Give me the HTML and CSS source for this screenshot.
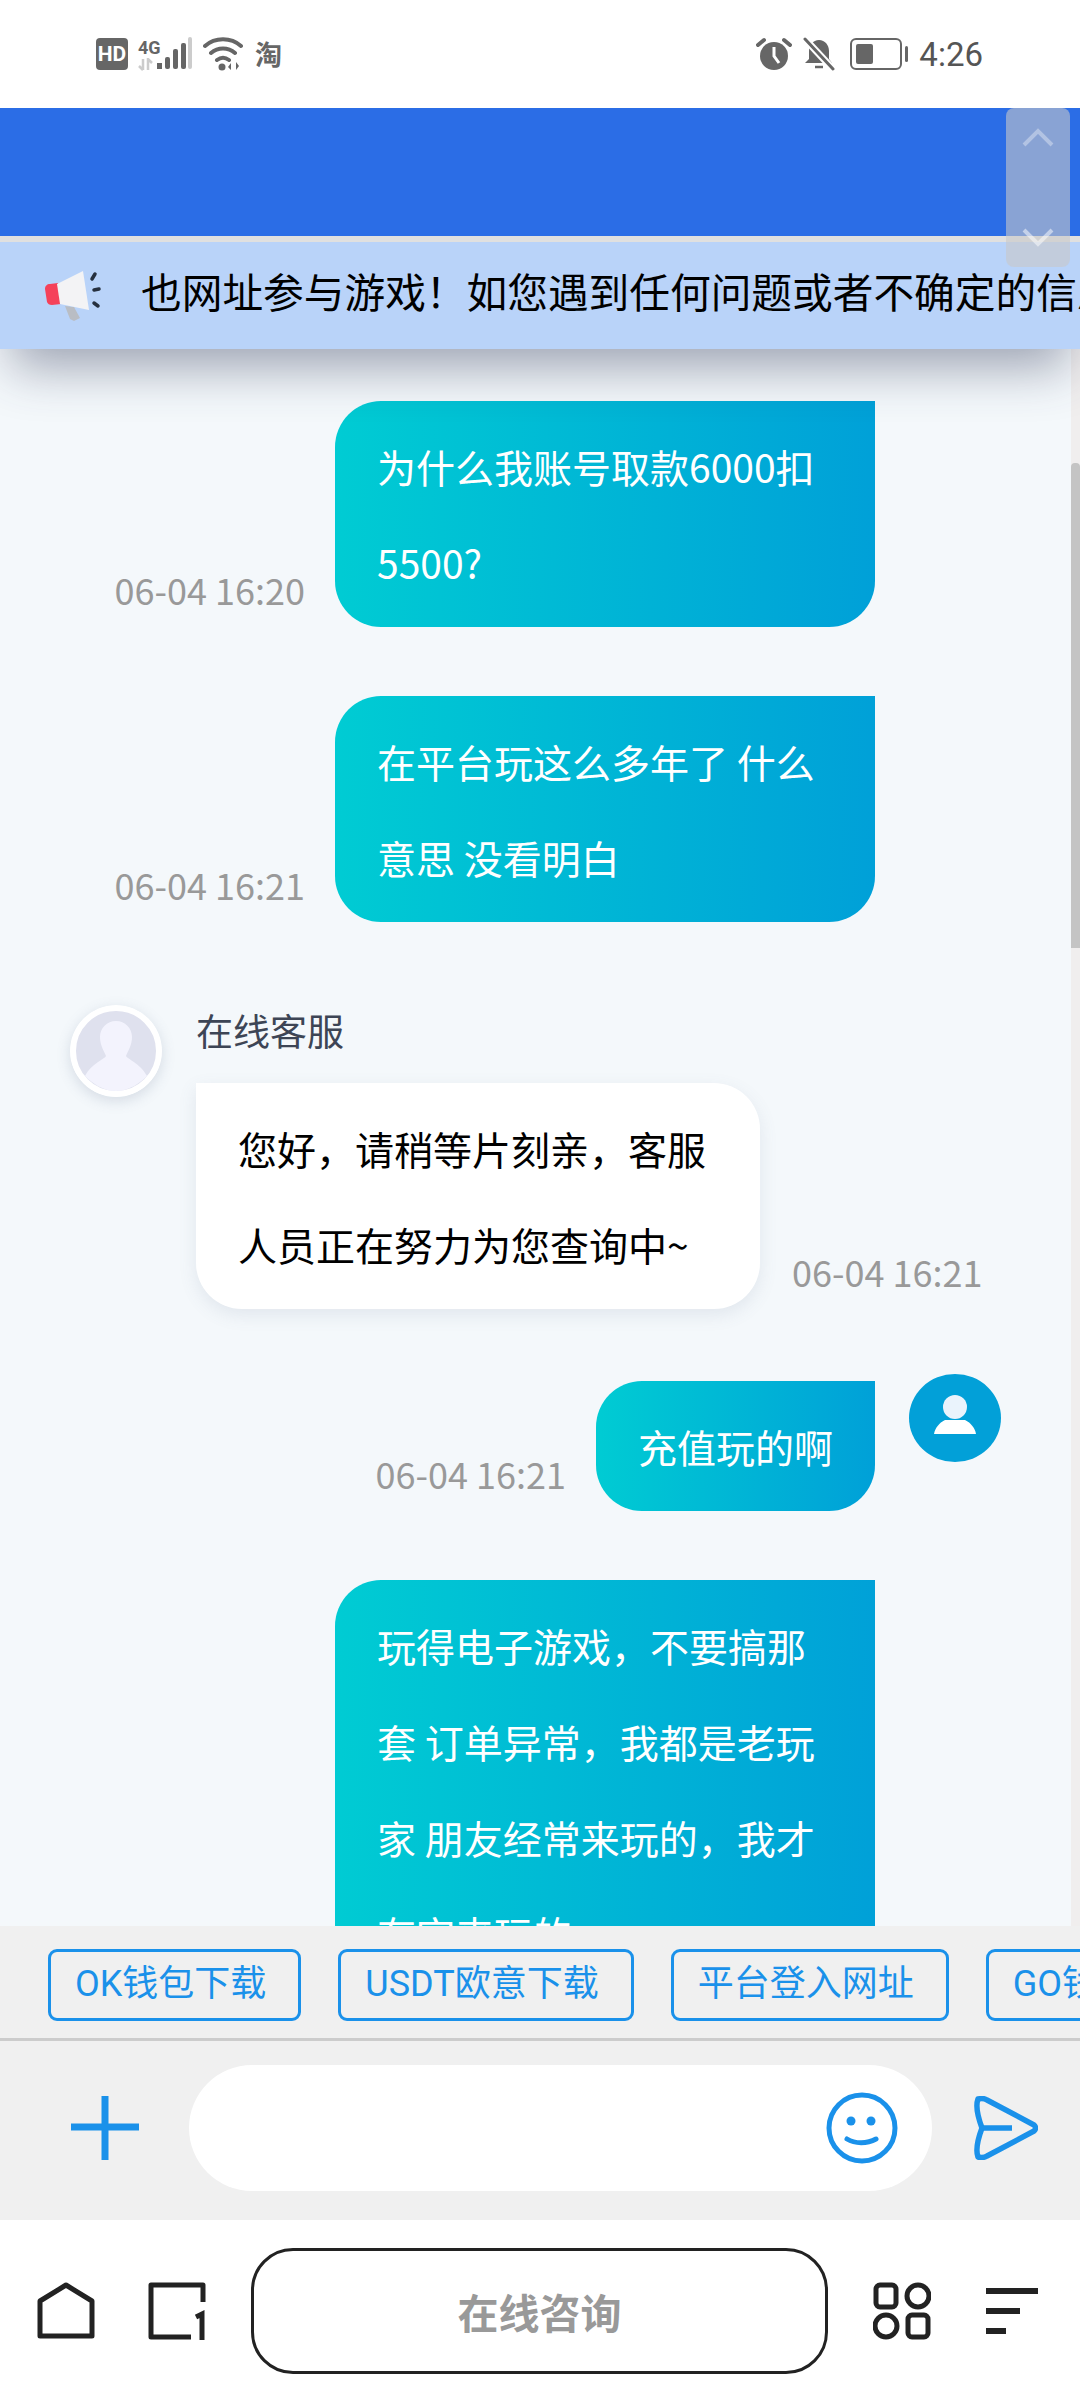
FILE: index.html
```html
<!DOCTYPE html>
<html lang="zh-CN">

<head>
  <meta charset="UTF-8">
  <meta name="viewport" content="width=device-width, initial-scale=1.0">
  <title>在线客服</title>
  <link rel="stylesheet" href="styles.css">
</head>

<body>
  <header class="status">
    <div class="status-left">
      <span class="hd">HD</span>
      <div class="net">
        <span class="net-label">4G</span>
        <svg width="22" height="13" viewBox="0 0 22 13"><path d="M5 1v11M1 8l4 4M10 12V1l4 4" fill="none" stroke="#ccc" stroke-width="2.5" /></svg>
      </div>
      <svg class="bars" width="36" height="34" viewBox="0 0 36 34">
        <rect x="0" y="26" width="5" height="6" fill="#666" />
        <rect x="8" y="20" width="5" height="12" rx="2" fill="#666" />
        <rect x="16" y="12" width="5" height="20" rx="2" fill="#666" />
        <rect x="24" y="6" width="5" height="26" rx="2" fill="#666" />
        <rect x="31" y="0" width="4" height="32" rx="2" fill="#ccc" />
      </svg>
      <svg class="wifi" width="40" height="34" viewBox="0 0 40 34">
        <path d="M2 9C12 0 28 0 38 9M8 16c7-6 17-6 24 0M14 23c4-3 8-3 12 0" fill="none" stroke="#666" stroke-width="4" stroke-linecap="round" />
        <circle cx="19" cy="30" r="3.5" fill="#666" />
        <path d="M28 33v-7l-3 4zM33 25v8l3-4z" fill="#666" />
      </svg>
      <span class="tao">淘</span>
    </div>
    <div class="status-right">
      <svg width="36" height="34" viewBox="0 0 36 34">
        <circle cx="18" cy="19" r="14" fill="#666" />
        <path d="M18 10v9l5 7" fill="none" stroke="#fff" stroke-width="3" />
        <path d="M2 8l6-5M34 8l-6-5" fill="none" stroke="#666" stroke-width="4" stroke-linecap="round" />
      </svg>
      <svg width="32" height="34" viewBox="0 0 32 34">
        <path d="M16 3c-6 0-10 5-10 11v8l-4 4h27l-3-4v-8c0-6-4-11-10-11z" fill="#666" />
        <path d="M12 30h8" stroke="#666" stroke-width="2.5" />
        <path d="M1 1l28 30" stroke="#fff" stroke-width="7" />
        <path d="M2 2l28 30" stroke="#666" stroke-width="3" stroke-linecap="round" />
      </svg>
      <div class="battery">
        <span class="battery-body"><span class="battery-level"></span></span>
        <span class="battery-tip"></span>
      </div>
      <span class="clock">4:26</span>
    </div>
  </header>

  <div class="topbar"></div>

  <div class="notice">
    <svg class="notice-icon" width="60" height="50" viewBox="0 0 60 50">
      <path d="M20 35l9 1 6 11-6 3-4-2z" fill="#b9bdc4" />
      <path d="M0 18c0-3 2-5 5-5l8-1 3 21-9 1c-3 0-4-1-5-3z" fill="#f5415a" />
      <path d="M12 13L38 0l6 39-29-6z" fill="#f3f3f5" />
      <path d="M50 3l-3 5M49 19l5-1M49 32l4 3" fill="none" stroke="#26303f" stroke-width="3.5" stroke-linecap="round" />
    </svg>
    <p class="notice-text">也网址参与游戏！如您遇到任何问题或者不确定的信息，请及时联系在线客服</p>
  </div>

  <main class="chat">
    <div class="msg msg-me">
      <time class="msg-time">06-04 16:20</time>
      <p class="bubble bubble-me">为什么我账号取款6000扣<br>5500?</p>
    </div>
    <div class="msg msg-me">
      <time class="msg-time">06-04 16:21</time>
      <p class="bubble bubble-me">在平台玩这么多年了 什么<br>意思 没看明白</p>
    </div>
    <div class="msg msg-agent">
      <svg class="avatar-agent" width="92" height="92" viewBox="0 0 92 92">
        <circle cx="46" cy="46" r="43" fill="#dfe1ee" stroke="#fff" stroke-width="6" />
        <path d="M30 32c0-9 7-16 16-16s16 7 16 16c0 8-4 14-6 19 1 3 14 7 21 20-7 7-18 15-31 15s-24-8-31-15c7-13 20-17 21-20-2-5-6-11-6-19z" fill="#f3f3fd" />
      </svg>
      <div class="agent-body">
        <div class="agent-name">在线客服</div>
        <div class="agent-row">
          <p class="bubble bubble-agent">您好，请稍等片刻亲，客服<br>人员正在努力为您查询中~</p>
          <time class="msg-time">06-04 16:21</time>
        </div>
      </div>
    </div>
    <div class="msg msg-me msg-short">
      <time class="msg-time">06-04 16:21</time>
      <p class="bubble bubble-me">充值玩的啊</p>
      <svg class="avatar-me" width="92" height="88" viewBox="0 0 92 88">
        <ellipse cx="46" cy="44" rx="46" ry="44" fill="#02a0d8" />
        <circle cx="46" cy="33" r="12" fill="#eaf3fc" />
        <path d="M36 46h20c6 3 10 8 11 14H25c1-6 5-11 11-14z" fill="#fff" />
      </svg>
    </div>
    <div class="msg msg-me">
      <p class="bubble bubble-me">玩得电子游戏，不要搞那<br>套 订单异常，我都是老玩<br>家 朋友经常来玩的，我才<br>有空来玩的</p>
    </div>
    <div class="scrollbar"><span class="scrollbar-thumb"></span></div>
  </main>

  <nav class="quick">
    <a class="quick-btn">OK钱包下载</a>
    <a class="quick-btn">USDT欧意下载</a>
    <a class="quick-btn">平台登入网址</a>
    <a class="quick-btn">GO钱包下载</a>
  </nav>

  <div class="composer">
    <svg width="68" height="64" viewBox="0 0 68 64">
      <path d="M34 0v64M0 31h68" fill="none" stroke="#1a91ea" stroke-width="7" />
    </svg>
    <div class="composer-input">
      <svg width="72" height="72" viewBox="0 0 72 72">
        <circle cx="36" cy="36" r="33" fill="none" stroke="#1a91ea" stroke-width="5" />
        <circle cx="25" cy="29" r="4.5" fill="#1a91ea" />
        <circle cx="45" cy="29" r="4.5" fill="#1a91ea" />
        <path d="M21 47c8 5 20 5 29 0" fill="none" stroke="#1a91ea" stroke-width="5" stroke-linecap="round" />
      </svg>
    </div>
    <svg class="send" width="64" height="64" viewBox="0 0 64 64">
      <path d="M4 3c4-1 6-1 9 1l47 25c2 2 2 4 0 6L13 60c-3 2-5 2-9 1-3-8 1-21 4-29C5 24 1 11 4 3z" fill="none" stroke="#1a91ea" stroke-width="5.5" stroke-linejoin="round" />
      <path d="M8 32h30" fill="none" stroke="#1a91ea" stroke-width="5.5" />
    </svg>
  </div>

  <footer class="browser">
    <svg width="58" height="58" viewBox="0 0 58 58">
      <path d="M3 54V19L29 3l26 16v35z" fill="none" stroke="#222" stroke-width="5" stroke-linejoin="round" />
    </svg>
    <svg width="58" height="58" viewBox="0 0 58 58">
      <path d="M55 20V3H3v52h40" fill="none" stroke="#222" stroke-width="5" stroke-linejoin="round" />
      <path d="M48 35l6-3v26" fill="none" stroke="#222" stroke-width="5" />
    </svg>
    <button class="browser-pill">在线咨询</button>
    <svg width="58" height="58" viewBox="0 0 58 58">
      <rect x="3" y="3" width="20" height="22" rx="4" fill="none" stroke="#222" stroke-width="5" />
      <circle cx="45" cy="14" r="11" fill="none" stroke="#222" stroke-width="5" />
      <circle cx="13" cy="44" r="11" fill="none" stroke="#222" stroke-width="5" />
      <rect x="35" y="33" width="20" height="22" rx="4" fill="none" stroke="#222" stroke-width="5" />
    </svg>
    <div class="menu-lines">
      <span class="line-long"></span>
      <span class="line-mid"></span>
      <span class="line-short"></span>
    </div>
  </footer>

  <div class="float-scroll">
    <svg width="32" height="20" viewBox="0 0 32 20"><path d="M2 17L16 3l14 14" fill="none" stroke="#fff" stroke-opacity=".35" stroke-width="4" /></svg>
    <svg width="32" height="20" viewBox="0 0 32 20"><path d="M2 3l14 14L30 3" fill="none" stroke="#fff" stroke-opacity=".5" stroke-width="4" /></svg>
  </div>
</body>

</html>
```

FILE: styles.css
```css
html {
  box-sizing: border-box;
  font-family: "Noto Sans CJK SC", "Noto Sans", sans-serif;
  font-size: 39px;
}

*,
*::before,
*::after {
  box-sizing: inherit;
}

body {
  position: relative;
  margin: 0;
  width: 1080px;
  height: 2400px;
  display: flex;
  flex-direction: column;
  overflow: hidden;
  background-color: #fff;
}

p {
  margin: 0;
}

/* status bar */
.status {
  height: 108px;
  flex: none;
  display: flex;
  justify-content: space-between;
  align-items: center;
  padding: 0 97px 0 96px;
  color: #666;
}

.status-left,
.status-right {
  display: flex;
  align-items: center;
}

.hd {
  width: 32px;
  height: 32px;
  border-radius: 4px;
  background-color: #666;
  color: #fff;
  font-family: "Roboto", sans-serif;
  font-size: 21px;
  font-weight: 700;
  line-height: 32px;
  text-align: center;
}

.net {
  width: 24px;
  margin-left: 10px;
  display: flex;
  flex-direction: column;
  align-items: flex-start;
}

.net-label {
  font-family: "Roboto", sans-serif;
  font-size: 18px;
  font-weight: 700;
  line-height: 20px;
}

.bars {
  margin-left: -5px;
}

.wifi {
  margin-left: 10px;
}

.tao {
  margin-left: 12px;
  font-size: 27px;
  font-weight: 700;
  line-height: 34px;
}

.status-right svg + svg {
  margin-left: 11px;
}

.battery {
  margin-left: 15px;
  display: flex;
  align-items: center;
}

.battery-body {
  width: 52px;
  height: 32px;
  padding: 4px;
  border: 2px solid #666;
  border-radius: 6px;
  display: block;
}

.battery-level {
  width: 17px;
  height: 100%;
  display: block;
  border-radius: 2px;
  background-color: #666;
}

.battery-tip {
  width: 3px;
  height: 16px;
  margin-left: 3px;
  border-radius: 2px;
  background-color: #666;
}

.clock {
  margin-left: 11px;
  font-family: "Roboto", sans-serif;
  font-size: 33px;
  color: #555;
}

/* blue header and notice */
.topbar {
  height: 134px;
  flex: none;
  background-color: #2b6de6;
  border-bottom: 6px solid #e0e0e0;
}

.notice {
  position: relative;
  z-index: 2;
  height: 107px;
  flex: none;
  display: flex;
  align-items: center;
  overflow: hidden;
  padding-left: 45px;
  background-color: #b9d3f9;
  box-shadow: 0 30px 50px -12px rgba(50, 60, 90, .45);
  clip-path: inset(0 0 -120px 0);
}

.notice-icon {
  flex: none;
}

.notice-text {
  margin: 0 0 11px 36px;
  color: #000;
  font-size: 40.7px;
  white-space: nowrap;
}

/* chat */
.chat {
  position: relative;
  flex: 1;
  min-height: 0;
  overflow: hidden;
  padding-top: 52px;
  background-color: #f4f8fb;
}

.msg {
  display: flex;
  margin-bottom: 69px;
}

.msg-me {
  justify-content: flex-end;
  align-items: flex-end;
  padding-right: 205px;
}

.msg-time {
  flex: none;
  margin-bottom: 16px;
  color: #999;
  font-size: 36px;
  line-height: 44px;
}

.msg-me .msg-time {
  margin-right: 30px;
}

.bubble {
  padding: 17px 42px;
  font-size: 39px;
  line-height: 96px;
  white-space: nowrap;
}

.bubble-me {
  width: 540px;
  border-radius: 46px 0 46px 46px;
  background: linear-gradient(92deg, #00ccd3, #00a0d8);
  color: #fff;
}

.bubble-agent {
  width: 564px;
  border-radius: 0 46px 46px 46px;
  background-color: #fff;
  color: #000;
  box-shadow: 0 6px 18px rgba(90, 110, 140, .12);
}

.msg-agent {
  margin-top: 83px;
  padding-left: 70px;
}

.avatar-agent {
  flex: none;
  border-radius: 50%;
  box-shadow: 0 4px 14px rgba(90, 110, 140, .2);
}

.agent-body {
  margin-left: 34px;
}

.agent-name {
  height: 78px;
  color: #3d4555;
  font-size: 37px;
  line-height: 50px;
}

.agent-row {
  display: flex;
  align-items: flex-end;
}

.agent-row .msg-time {
  margin-left: 32px;
  margin-bottom: 16px;
}

.msg-short {
  position: relative;
  margin-top: 72px;
}

.msg-short .bubble-me {
  width: auto;
}

.avatar-me {
  position: absolute;
  top: -7px;
  right: 79px;
}

.scrollbar {
  position: absolute;
  top: 0;
  right: 0;
  bottom: 0;
  width: 9px;
  background-color: #f0eeee;
}

.scrollbar-thumb {
  display: block;
  height: 485px;
  margin-top: 114px;
  border-radius: 4px 4px 0 0;
  background-color: #c4c4c4;
}

/* quick links */
.quick {
  height: 115px;
  flex: none;
  display: flex;
  gap: 37px;
  overflow: hidden;
  padding: 23px 0 0 48px;
  background-color: #f0f0f0;
  border-bottom: 3px solid #ccc;
}

.quick-btn {
  height: 72px;
  flex: none;
  padding: 0 32px 0 24px;
  border: 3px solid #1a91ea;
  border-radius: 9px;
  color: #1a91ea;
  font-family: "Roboto", "Noto Sans CJK SC", sans-serif;
  font-size: 36px;
  line-height: 65px;
}

/* input row */
.composer {
  height: 179px;
  flex: none;
  display: flex;
  align-items: center;
  padding: 0 42px 6px 71px;
  background-color: #f0f0f0;
}

.composer-input {
  width: 743px;
  height: 126px;
  margin-left: 50px;
  padding-right: 34px;
  display: flex;
  justify-content: flex-end;
  align-items: center;
  border-radius: 63px;
  background-color: #fff;
}

.send {
  margin-left: auto;
}

/* browser bar */
.browser {
  height: 180px;
  flex: none;
  display: flex;
  align-items: center;
  padding: 2px 42px 0 37px;
}

.browser-pill {
  width: 577px;
  height: 126px;
  margin: 0 45px;
  border: 3px solid #222;
  border-radius: 42px;
  background: none;
  color: #999;
  font-family: inherit;
  font-size: 41px;
  font-weight: 700;
}

.browser svg:first-child + svg {
  margin-left: 53px;
}

.menu-lines {
  width: 52px;
  margin-left: auto;
  display: flex;
  flex-direction: column;
  gap: 14px;
}

.menu-lines span {
  height: 6px;
  background-color: #222;
}

.line-long {
  width: 52px;
}

.line-mid {
  width: 34px;
}

.line-short {
  width: 20px;
}

/* floating scroll buttons */
.float-scroll {
  position: absolute;
  top: 108px;
  left: 1006px;
  z-index: 3;
  width: 64px;
  height: 159px;
  padding: 20px 0;
  display: flex;
  flex-direction: column;
  justify-content: space-between;
  align-items: center;
  border-radius: 8px;
  background-color: rgba(200, 200, 200, .6);
}
```
